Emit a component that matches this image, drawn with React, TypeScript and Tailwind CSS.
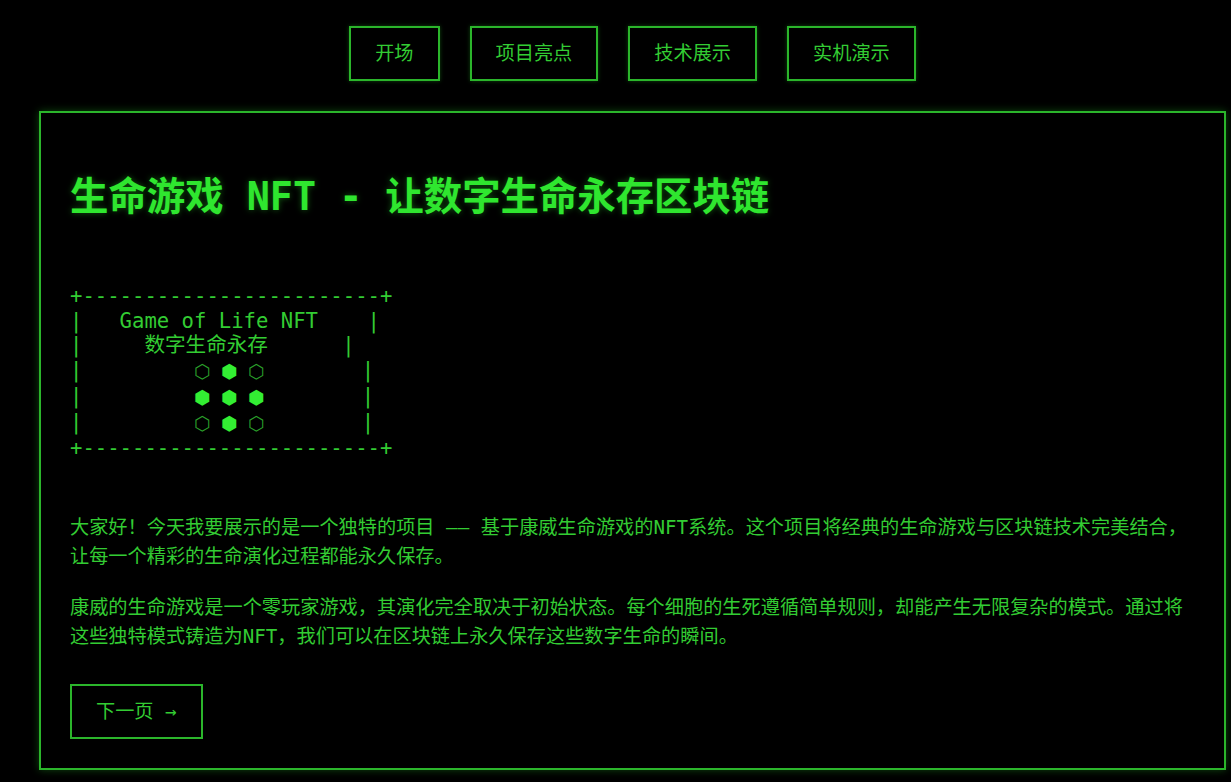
import React from 'react'

const navItems = ['开场', '项目亮点', '技术展示', '实机演示']

const art = [
  '+------------------------+',
  '|   Game of Life NFT    |',
  '|     数字生命永存      |',
]

const NavButton = ({ label }: { label: string }) => (
  <button
    type="button"
    className="border-2 border-[#2bb52b] bg-black px-[24px] py-[12px] text-[19.2px] leading-[27px] text-[#33cc33] shadow-[0_0_4px_rgba(40,200,40,0.35)]"
  >
    {label}
  </button>
)

const Hex = ({ filled }: { filled: boolean }) => (
  <span
    className={
      'inline-block w-[14.6px] text-center align-top text-[19px] leading-[26px] ' +
      (filled ? 'text-[#33ee33]' : 'text-[#2a9f2a]')
    }
  >
    {filled ? '⬢' : '⬡'}
  </span>
)

const HexRow = ({ cells }: { cells: boolean[] }) => (
  <>
    {'|         '}
    <Hex filled={cells[0]} /> <Hex filled={cells[1]} /> <Hex filled={cells[2]} />
    {'        |'}
    {'\n'}
  </>
)

const App = () => {
  return (
    <div className="min-h-screen bg-black font-['DejaVu_Sans_Mono','Noto_Sans_CJK_SC',monospace] text-[#33cc33]">
      <div className="ml-[39px] w-[1187px] pt-[26px]">
        <nav className="flex justify-center gap-[30px]">
          {navItems.map((item) => (
            <NavButton key={item} label={item} />
          ))}
        </nav>

        <section className="mt-[30px] h-[659px] border-2 border-[#2bb52b] px-[29px] pt-[61px] shadow-[0_0_8px_rgba(40,200,40,0.35)]">
          <h1 className="m-0 text-[38.4px] font-bold leading-[46px] text-[#2fe62f] [text-shadow:0_0_6px_rgba(50,255,50,0.35)]">
            生命游戏 NFT - 让数字生命永存区块链
          </h1>

          <pre className="mt-[64px] h-[172px] font-['DejaVu_Sans_Mono','Noto_Sans_CJK_SC',monospace] text-[20.6px] leading-[24.5px] text-[#33cc33]">
            {art.join('\n') + '\n'}
            <HexRow cells={[false, true, false]} />
            <HexRow cells={[true, true, true]} />
            <HexRow cells={[false, true, false]} />
            {'+------------------------+'}
          </pre>

          <p className="mt-[57px] text-[19.2px] leading-[29px]">
            大家好！今天我要展示的是一个独特的项目 —— 基于康威生命游戏的NFT系统。这个项目将经典的生命游戏与区块链技术完美结合，
            <br />
            让每一个精彩的生命演化过程都能永久保存。
          </p>
          <p className="mt-[22px] text-[19.2px] leading-[29px]">
            康威的生命游戏是一个零玩家游戏，其演化完全取决于初始状态。每个细胞的生死遵循简单规则，却能产生无限复杂的模式。通过将
            <br />
            这些独特模式铸造为NFT，我们可以在区块链上永久保存这些数字生命的瞬间。
          </p>

          <button
            type="button"
            className="mt-[33px] border-2 border-[#2bb52b] bg-black px-[24px] py-[12px] text-[19.2px] leading-[27px] text-[#33cc33]"
          >
            下一页 →
          </button>
        </section>
      </div>
    </div>
  )
}

export default App
